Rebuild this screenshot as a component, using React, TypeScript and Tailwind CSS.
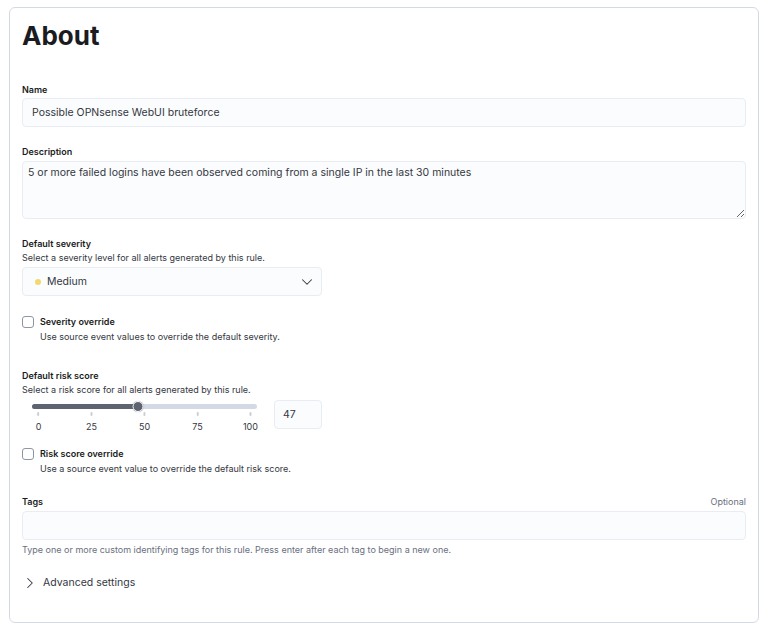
import { ChevronDown, ChevronRight } from "lucide-react"

const font = { fontFamily: "Inter, 'Noto Sans', sans-serif" }

function Label({ children, right }: { children: React.ReactNode; right?: string }) {
  return (
    <div className="flex items-baseline justify-between leading-[14px]">
      <span className="text-[9px] font-semibold text-[#1a1c21]">{children}</span>
      {right && <span className="text-[9px] text-[#69707d]">{right}</span>}
    </div>
  )
}

function Help({ children, light }: { children: React.ReactNode; light?: boolean }) {
  return (
    <div className={`text-[9px] leading-[14px] ${light ? "text-[#69707d]" : "text-[#343741]"}`}>
      {children}
    </div>
  )
}

function Checkbox({ label, help }: { label: string; help: string }) {
  return (
    <div>
      <div className="flex items-center gap-[6px]">
        <span className="h-[12px] w-[12px] rounded-[3px] border border-[#8f96a3] bg-white" />
        <span className="text-[9px] font-semibold leading-[14px] text-[#1a1c21]">{label}</span>
      </div>
      <div className="ml-[18px] mt-[1px]">
        <Help>{help}</Help>
      </div>
    </div>
  )
}

function RiskSlider({ value }: { value: number }) {
  const ticks = [0, 25, 50, 75, 100]
  // ticks sit 6.6px inside the track on each side
  const pos = (v: number) => `calc(6.6px + ${v / 100} * (100% - 13.2px))`
  return (
    <div className="relative ml-[10px] h-[29px] w-[225px]">
      <div className="absolute left-0 right-0 top-[4px] h-[5px] rounded-full bg-[#d3dae6]" />
      <div
        className="absolute left-0 top-[4px] h-[5px] rounded-full bg-[#5e646f]"
        style={{ width: pos(value) }}
      />
      <div
        className="absolute top-[1px] h-[11px] w-[11px] -translate-x-1/2 rounded-full border border-white bg-[#5e646f] shadow-[0_0_1px_rgba(0,0,0,0.4)]"
        style={{ left: pos(value) }}
      />
      {ticks.map((t) => (
        <div key={t} className="absolute top-[12px] -translate-x-1/2" style={{ left: pos(t) }}>
          <div className="mx-auto h-[4px] w-[2px] rounded-full bg-[#c9cfd8]" />
          <div className="mt-[5px] text-center text-[9px] leading-[12px] text-[#343741]">{t}</div>
        </div>
      ))}
    </div>
  )
}

export default function App() {
  return (
    <div className="min-h-[631px] bg-white pt-[7px]" style={font}>
      <div className="ml-[9px] h-[616px] w-[750px] rounded-[6px] border border-[#d3dae6] px-[12px] pt-[12px]">
        <h1 className="text-[26px] font-bold leading-[32px] text-[#1a1c21]">About</h1>

        <div className="mt-[31px]">
          <Label>Name</Label>
          <div className="mt-[1px] flex h-[29px] items-center rounded-[4px] border border-[#e9edf3] bg-[#fbfcfd] pl-[9px] text-[10.5px] text-[#343741]">
            Possible OPNsense WebUI bruteforce
          </div>
        </div>

        <div className="mt-[18px]">
          <Label>Description</Label>
          <textarea
            readOnly
            defaultValue="5 or more failed logins have been observed coming from a single IP in the last 30 minutes"
            className="mt-[2px] block h-[58px] w-full resize-y rounded-[4px] border border-[#e9edf3] bg-[#fbfcfd] px-[5px] pt-[4px] text-[10.5px] leading-[14px] text-[#343741] outline-none"
          />
        </div>

        <div className="mt-[18px]">
          <Label>Default severity</Label>
          <Help>Select a severity level for all alerts generated by this rule.</Help>
          <div className="mt-[2px] flex h-[29px] w-[300px] items-center rounded-[4px] border border-[#e9edf3] bg-[#fbfcfd] pl-[12px] pr-[5px]">
            <span className="h-[6px] w-[6px] rounded-full bg-[#f1d86f]" />
            <span className="ml-[6px] flex-1 text-[10.5px] text-[#343741]">Medium</span>
            <ChevronDown size={18} strokeWidth={1.4} className="text-[#343741]" />
          </div>
        </div>

        <div className="mt-[19px]">
          <Checkbox label="Severity override" help="Use source event values to override the default severity." />
        </div>

        <div className="mt-[25px]">
          <Label>Default risk score</Label>
          <Help>Select a risk score for all alerts generated by this rule.</Help>
          <div className="mt-[3px] flex">
            <RiskSlider value={47} />
            <div className="ml-[17px] flex h-[29px] w-[48px] items-center rounded-[4px] border border-[#e9edf3] bg-[#fbfcfd] pl-[8px] text-[10.5px] text-[#343741]">
              47
            </div>
          </div>
        </div>

        <div className="mt-[18px]">
          <Checkbox label="Risk score override" help="Use a source event value to override the default risk score." />
        </div>

        <div className="mt-[19px]">
          <Label right="Optional">Tags</Label>
          <div className="mt-[2px] h-[29px] rounded-[4px] border border-[#e9edf3] bg-[#fbfcfd]" />
          <div className="mt-[3px]">
            <Help light>Type one or more custom identifying tags for this rule. Press enter after each tag to begin a new one.</Help>
          </div>
        </div>

        <div className="-ml-[1px] mt-[17px] flex items-center gap-[4px] leading-[18px]">
          <ChevronRight size={18} strokeWidth={1.4} className="text-[#343741]" />
          <span className="text-[10.5px] text-[#343741]">Advanced settings</span>
        </div>
      </div>
    </div>
  )
}
